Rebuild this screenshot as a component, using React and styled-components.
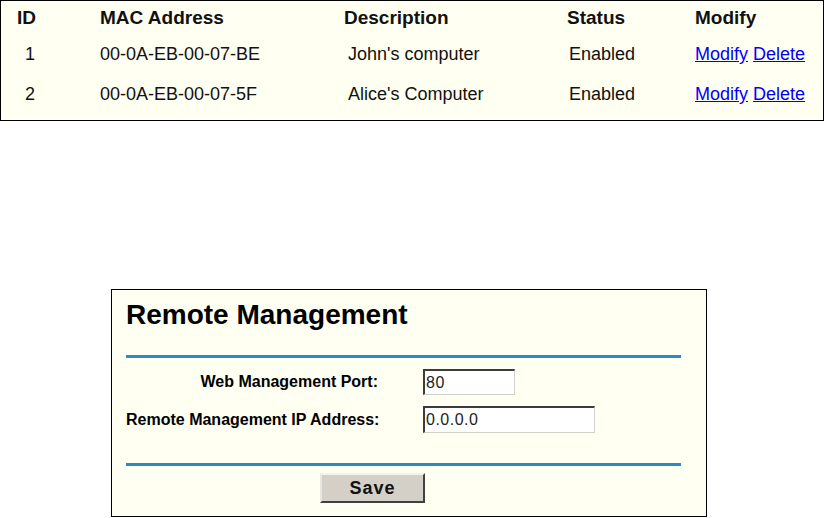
import React from "react";
import styled, { createGlobalStyle } from "styled-components";

const GlobalStyle = createGlobalStyle`
  html, body {
    margin: 0;
    padding: 0;
    background: #ffffff;
    font-family: "Liberation Sans", Arial, Helvetica, sans-serif;
  }
`;

const Page = styled.div`
  display: flex;
  flex-direction: column;
  width: 824px;
  height: 518px;
  overflow: hidden;
`;

const TableBox = styled.div`
  box-sizing: border-box;
  width: 824px;
  height: 121px;
  border: 1px solid #000;
  background: #fffff2;
  padding-left: 16px;
  display: grid;
  grid-template-columns: 83px 244px 223px 128px 1fr;
  grid-template-rows: 33px 40px 40px;
  align-items: center;
  color: #111;
`;

const HeadCell = styled.div`
  font-size: 19px;
  font-weight: bold;
  line-height: 22px;
  white-space: nowrap;
`;

const Cell = styled.div`
  font-size: 18px;
  line-height: 22px;
  white-space: nowrap;
  padding-left: ${(p) => p.$indent || 0}px;
`;

const Link = styled.a`
  color: #0000ff;
  text-decoration: underline;
  cursor: pointer;
`;

const Panel = styled.div`
  box-sizing: border-box;
  margin-top: 168px;
  margin-left: 111px;
  width: 596px;
  height: 228px;
  border: 1px solid #000;
  background: #fffff2;
  display: flex;
  flex-direction: column;
  padding: 9px 25px 0 14px;
  color: #000;
`;

const Title = styled.div`
  font-size: 28px;
  font-weight: bold;
  line-height: 32px;
  white-space: nowrap;
`;

const Rule = styled.div`
  height: 3px;
  background: #2a8cc2;
  margin-top: ${(p) => p.$top}px;
`;

const Form = styled.div`
  display: grid;
  grid-template-columns: 252px 1fr;
  column-gap: 45px;
  row-gap: 11px;
  grid-template-rows: 26px 27px;
  align-items: center;
  margin-top: 11px;
`;

const Label = styled.div`
  font-size: 16px;
  font-weight: bold;
  text-align: right;
  white-space: nowrap;
`;

const Input = styled.div`
  box-sizing: border-box;
  width: ${(p) => p.$width}px;
  height: 100%;
  background: #ffffff;
  border-top: 2px solid #3c3c3c;
  border-left: 2px solid #3c3c3c;
  border-right: 1px solid #d0d0c8;
  border-bottom: 1px solid #d0d0c8;
  font-size: 16px;
  letter-spacing: 0.5px;
  color: #222;
  padding: 0 0 0 1px;
  display: flex;
  align-items: center;
`;

const SaveButton = styled.button`
  box-sizing: border-box;
  margin-top: 7px;
  margin-left: 194px;
  width: 105px;
  height: 30px;
  background: #d4d0c8;
  border-top: 2px solid #f2f2ee;
  border-left: 2px solid #e6e6e2;
  border-right: 2px solid #404040;
  border-bottom: 2px solid #404040;
  font-family: "Liberation Sans", Arial, sans-serif;
  font-size: 18px;
  font-weight: bold;
  letter-spacing: 1px;
  color: #111;
  padding: 0;
`;

const rows = [
  { id: "1", mac: "00-0A-EB-00-07-BE", desc: "John's computer", status: "Enabled" },
  { id: "2", mac: "00-0A-EB-00-07-5F", desc: "Alice's Computer", status: "Enabled" },
];

export default function App() {
  return (
    <>
      <GlobalStyle />
      <Page>
        <TableBox>
          <HeadCell>ID</HeadCell>
          <HeadCell>MAC Address</HeadCell>
          <HeadCell>Description</HeadCell>
          <HeadCell>Status</HeadCell>
          <HeadCell>Modify</HeadCell>
          {rows.map((r) => (
            <React.Fragment key={r.id}>
              <Cell $indent={8}>{r.id}</Cell>
              <Cell>{r.mac}</Cell>
              <Cell $indent={4}>{r.desc}</Cell>
              <Cell $indent={2}>{r.status}</Cell>
              <Cell>
                <Link>Modify</Link> <Link>Delete</Link>
              </Cell>
            </React.Fragment>
          ))}
        </TableBox>
        <Panel>
          <Title>Remote Management</Title>
          <Rule $top={24} />
          <Form>
            <Label>Web Management Port:</Label>
            <Input $width={92}>80</Input>
            <Label>Remote Management IP Address:</Label>
            <Input $width={172}>0.0.0.0</Input>
          </Form>
          <Rule $top={30} />
          <SaveButton>Save</SaveButton>
        </Panel>
      </Page>
    </>
  );
}
